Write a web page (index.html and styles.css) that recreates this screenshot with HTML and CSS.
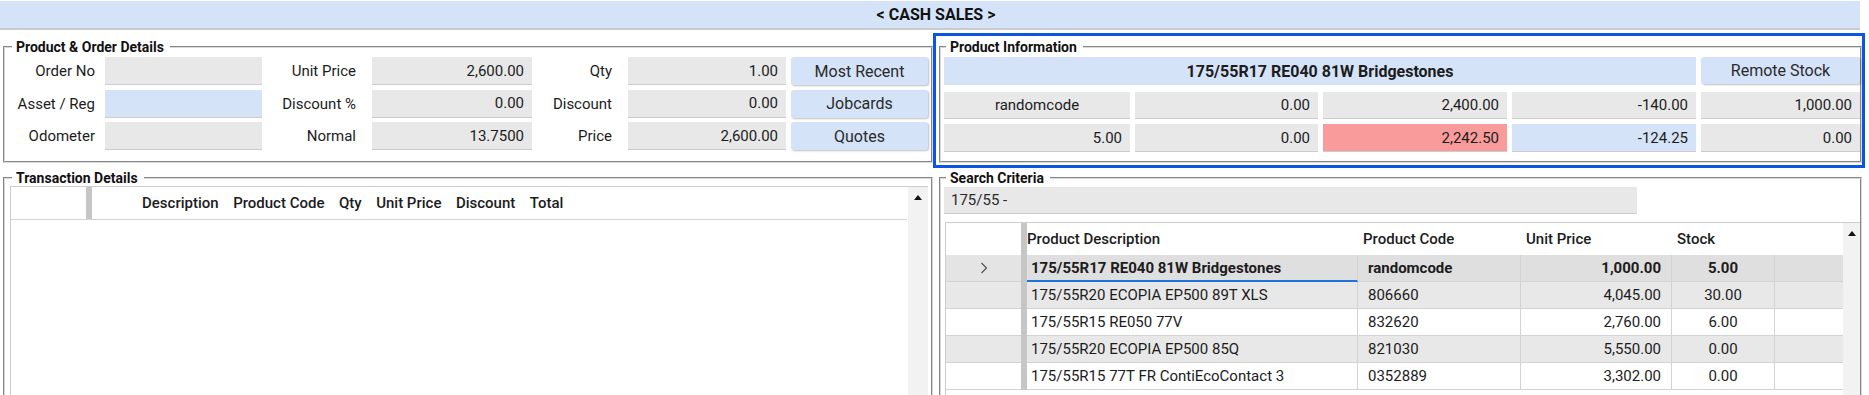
FILE: index.html
```html
<!DOCTYPE html>
<html lang="en">
<head>
    <meta charset="UTF-8">
    <title>Cash Sales</title>
    <link rel="stylesheet" href="styles.css">
</head>
<body>
    <div class="title-bar">&lt; CASH SALES &gt;</div>

    <div class="layout">
        <!-- Product & Order Details -->
        <fieldset class="group order-group">
            <legend>Product &amp; Order Details</legend>
            <div class="order-grid">
                <div class="label first">Order No</div>
                <div class="field"></div>
                <div class="label">Unit Price</div>
                <div class="field num">2,600.00</div>
                <div class="label">Qty</div>
                <div class="field num">1.00</div>
                <div class="btn">Most Recent</div>

                <div class="label first">Asset / Reg</div>
                <div class="field blue"></div>
                <div class="label">Discount %</div>
                <div class="field num">0.00</div>
                <div class="label">Discount</div>
                <div class="field num">0.00</div>
                <div class="btn">Jobcards</div>

                <div class="label first">Odometer</div>
                <div class="field"></div>
                <div class="label">Normal</div>
                <div class="field num">13.7500</div>
                <div class="label">Price</div>
                <div class="field num">2,600.00</div>
                <div class="btn">Quotes</div>
            </div>
        </fieldset>

        <!-- Product Information -->
        <div class="highlight">
            <fieldset class="group info-group">
                <legend>Product Information</legend>
                <div class="info-grid">
                    <div class="info-title">175/55R17 RE040 81W Bridgestones</div>
                    <div class="btn">Remote Stock</div>

                    <div class="field center">randomcode</div>
                    <div class="field num">0.00</div>
                    <div class="field num">2,400.00</div>
                    <div class="field num">-140.00</div>
                    <div class="field num">1,000.00</div>

                    <div class="field num">5.00</div>
                    <div class="field num">0.00</div>
                    <div class="field num red">2,242.50</div>
                    <div class="field num blue">-124.25</div>
                    <div class="field num">0.00</div>
                </div>
            </fieldset>
        </div>

        <!-- Transaction Details -->
        <fieldset class="group trans-group">
            <legend>Transaction Details</legend>
            <div class="grid-box trans-grid">
                <div class="grid-main">
                    <div class="trans-head">
                        <div class="row-head"></div>
                        <div class="splitter"></div>
                        <div class="trans-cols">
                            <span>Description</span>
                            <span>Product Code</span>
                            <span>Qty</span>
                            <span>Unit Price</span>
                            <span>Discount</span>
                            <span>Total</span>
                        </div>
                    </div>
                </div>
                <div class="scrollbar"><span class="arrow"></span></div>
            </div>
        </fieldset>

        <!-- Search Criteria -->
        <fieldset class="group search-group">
            <legend>Search Criteria</legend>
            <div class="field search-field">175/55 -</div>
            <div class="grid-box prod-grid">
                <div class="grid-main">
                    <div class="prow phead">
                        <div></div>
                        <div class="splitter"></div>
                        <div class="first-col">Product Description</div>
                        <div>Product Code</div>
                        <div>Unit Price</div>
                        <div>Stock</div>
                        <div></div>
                    </div>
                    <div class="prow sel">
                        <div class="row-head">
                            <svg width="8" height="12" viewBox="0 0 8 12"><polyline points="1.5,1 6.5,6 1.5,11" fill="none" stroke="#555" stroke-width="1.2"/></svg>
                        </div>
                        <div class="splitter"></div>
                        <div class="desc current">175/55R17 RE040 81W Bridgestones</div>
                        <div class="code">randomcode</div>
                        <div class="price">1,000.00</div>
                        <div class="stock">5.00</div>
                        <div class="filler"></div>
                    </div>
                    <div class="prow alt">
                        <div class="row-head"></div>
                        <div class="splitter"></div>
                        <div class="desc">175/55R20 ECOPIA EP500 89T XLS</div>
                        <div class="code">806660</div>
                        <div class="price">4,045.00</div>
                        <div class="stock">30.00</div>
                        <div class="filler"></div>
                    </div>
                    <div class="prow">
                        <div class="row-head"></div>
                        <div class="splitter"></div>
                        <div class="desc">175/55R15 RE050 77V</div>
                        <div class="code">832620</div>
                        <div class="price">2,760.00</div>
                        <div class="stock">6.00</div>
                        <div class="filler"></div>
                    </div>
                    <div class="prow alt">
                        <div class="row-head"></div>
                        <div class="splitter"></div>
                        <div class="desc">175/55R20 ECOPIA EP500 85Q</div>
                        <div class="code">821030</div>
                        <div class="price">5,550.00</div>
                        <div class="stock">0.00</div>
                        <div class="filler"></div>
                    </div>
                    <div class="prow">
                        <div class="row-head"></div>
                        <div class="splitter"></div>
                        <div class="desc">175/55R15 77T FR ContiEcoContact 3</div>
                        <div class="code">0352889</div>
                        <div class="price">3,302.00</div>
                        <div class="stock">0.00</div>
                        <div class="filler"></div>
                    </div>
                </div>
                <div class="scrollbar"><span class="arrow"></span></div>
            </div>
        </fieldset>
    </div>
</body>
</html>
```

FILE: styles.css
```css
* {
    box-sizing: border-box;
}
html, body {
    height: 395px;
    overflow: hidden;
}
body {
    margin: 0;
    font-family: Roboto, "Liberation Sans", Arial, sans-serif;
    font-size: 15px;
    color: #1c1c1c;
    background-color: #ffffff;
}
.title-bar {
    width: 1860px;
    height: 29px;
    margin-top: 1px;
    padding-left: 12px;
    background-color: #d5e3f8;
    border-bottom: 2px solid #cbcbcb;
    text-align: center;
    font-size: 16px;
    font-weight: 700;
    line-height: 27px;
    color: #111111;
}
.layout {
    display: grid;
    grid-template-columns: 930px 932px;
    align-items: start;
    height: 365px;
    margin-left: 3px;
    overflow: hidden;
}

/* group boxes */
.group {
    margin: 0;
    min-width: 0;
    padding: 2px 3px 11px 5px;
    border: 2px groove #dadada;
}
.group legend {
    margin-left: 2px;
    padding: 0 6px 0 4px;
    font-size: 14px;
    font-weight: 700;
    line-height: 16px;
    color: #111111;
}

/* fields and buttons */
.field {
    display: flex;
    align-items: center;
    padding: 0 8px;
    background-color: #e8e8e8;
    border-bottom: 1px solid #cccccc;
    white-space: nowrap;
}
.field.num {
    justify-content: flex-end;
}
.field.center {
    justify-content: center;
}
.field.blue {
    background-color: #d5e3f8;
}
.field.red {
    background-color: #f99b9b;
}
.btn {
    display: flex;
    align-items: center;
    justify-content: center;
    margin-left: 5px;
    background-color: #d5e3f8;
    border-radius: 3px;
    box-shadow: 1px 1px 2px rgba(0, 0, 0, 0.25);
    font-size: 16px;
    color: #2a2a2a;
}
.label {
    display: flex;
    align-items: center;
    justify-content: flex-end;
    padding-right: 16px;
    white-space: nowrap;
}
.label.first {
    padding-right: 10px;
}

/* product & order details */
.order-group {
    margin-top: 9px;
}
.order-grid {
    display: grid;
    grid-template-columns: 95px 157px 110px 160px 96px 158px 142px;
    grid-auto-rows: 28px;
    row-gap: 4.5px;
}

/* product information */
.highlight {
    margin-top: 3px;
    padding: 3px 0 2px 3px;
    border: 3px solid #0a55e4;
}
.info-group {
    padding: 2px 0 9px 3px;
}
.info-grid {
    display: grid;
    grid-template-columns: 186px 183px 184px 184px 1fr;
    grid-template-rows: 30px 27px 28px;
    column-gap: 5px;
    row-gap: 5px;
}
.info-title {
    grid-column: 1 / 5;
    height: 28px;
    display: flex;
    align-items: center;
    justify-content: center;
    background-color: #d5e3f8;
    font-size: 16px;
    font-weight: 700;
}
.info-grid .btn {
    margin-left: 0;
    height: 27px;
}

/* data grids */
.trans-group {
    margin-top: 2px;
    height: 240px;
    padding: 0 3px 0 5px;
}
.search-group {
    margin: 2px 3px 0 6px;
    height: 240px;
    padding: 1px 0 0 3px;
}
.grid-box {
    display: flex;
    border-top: 1px solid #cdcdcd;
    border-left: 1px solid #cdcdcd;
}
.grid-main {
    flex: 1;
}
.scrollbar {
    display: flex;
    justify-content: center;
    padding-top: 8px;
    background-color: #f2f2f2;
}
.arrow {
    width: 0;
    height: 0;
    border-left: 4px solid transparent;
    border-right: 4px solid transparent;
    border-bottom: 5px solid #111111;
}
.splitter {
    background-color: #c6c6c6;
}
.trans-grid {
    height: 220px;
}
.trans-grid .scrollbar {
    width: 20px;
    margin-left: 1px;
}
.trans-head {
    display: flex;
    height: 33px;
    border-bottom: 1px solid #d4d4d4;
}
.trans-head .row-head {
    width: 75px;
}
.trans-head .splitter {
    width: 6px;
}
.trans-cols {
    display: flex;
    align-items: center;
    gap: 14.5px;
    padding-left: 50px;
    font-weight: 500;
}

.search-field {
    width: 693px;
    height: 27px;
    padding-left: 7px;
    color: #2a2a2a;
}
.prod-grid {
    height: 200px;
    margin: 8px 0 0 1px;
}
.prod-grid .scrollbar {
    width: 17px;
}
.prow {
    display: grid;
    grid-template-columns: 75px 6px 331px 163px 151px 103px 1fr;
    height: 27px;
}
.prow > div {
    display: flex;
    align-items: center;
    border-bottom: 1px solid #d3d3d3;
    white-space: nowrap;
}
.prow > .splitter {
    border-bottom: none;
}
.phead {
    height: 32px;
    font-weight: 500;
}
.phead > div {
    border-bottom: none;
    padding-left: 5px;
}
.phead > .first-col {
    padding-left: 0;
}
.row-head {
    justify-content: center;
}
.desc, .code, .price, .stock {
    border-right: 1px solid #d3d3d3;
}
.desc {
    padding-left: 4px;
}
.code {
    padding-left: 10px;
}
.price {
    justify-content: flex-end;
    padding-right: 10px;
}
.stock {
    justify-content: center;
}
.prow.alt > div {
    background-color: #e8e8e8;
}
.prow.sel > div {
    background-color: #dfdfdf;
    font-weight: 700;
}
.prow.sel > .row-head {
    background-color: #e4e4e4;
}
.prow > .splitter,
.prow.alt > .splitter,
.prow.sel > .splitter {
    background-color: #c6c6c6;
}
.prow.sel > .current {
    border-bottom: 2px solid #1c74d9;
}
```
